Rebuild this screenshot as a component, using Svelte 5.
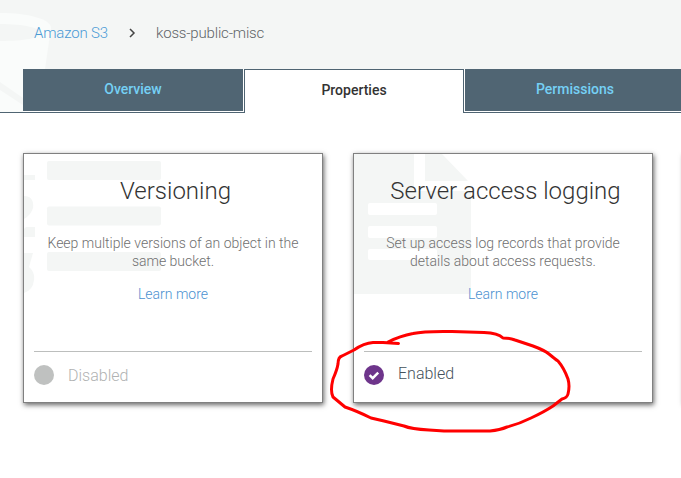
<script>
  const tabs = [
    { name: 'Overview', active: false },
    { name: 'Properties', active: true },
    { name: 'Permissions', active: false }
  ];
  const cards = [
    { title: 'Versioning', lines: ['Keep multiple versions of an object in the', 'same bucket.'], enabled: false, art: 'list' },
    { title: 'Server access logging', lines: ['Set up access log records that provide', 'details about access requests.'], enabled: true, art: 'document' }
  ];
</script>

<div class="page">
  <header>
    <svg class="bucket" width="60" height="112" viewBox="0 0 60 112">
      <path d="M0 13C28 13 51 19 51 28L45 69L38 112H0Z" fill="#fafcfb" />
      <path d="M0 24C24 24 41 28 41 33S24 41 0 41Z" fill="#f4f6f5" />
      <path d="M0 82L23 98V105L0 90Z" fill="#f4f6f5" />
    </svg>
    <nav class="crumbs">
      <a class="root">Amazon S3</a>
      <svg width="7" height="10" viewBox="0 0 7 10"><path d="M1 1L5 5L1 9" fill="none" stroke="#444" stroke-width="1.5" /></svg>
      <span class="bucket-name">koss-public-misc</span>
    </nav>
    <div class="tabs">
      {#each tabs as tab}
        <div class="tab" class:active={tab.active}><span>{tab.name}</span></div>
      {/each}
    </div>
  </header>

  <main>
    {#each cards as card}
      <section class="card">
        <svg class="art" width="140" height="150" viewBox="0 0 140 150" fill="#f4f6f5">
          {#if card.art === 'list'}
            <rect x="23" y="7" width="114" height="19" rx="2" />
            <rect x="23" y="52.500" width="114" height="19" rx="2" />
            <rect x="23" y="98" width="114" height="19" rx="2" />
            <path d="M0 21H11V26H0ZM0 42C8 42 10 48 9 54Q7 61 0 65ZM0 75L2 73H11V83H0ZM0 99H9L5 113Q11 118 10 126Q9 136 0 139Z" />
          {:else}
            <path d="M0 0H60V37H117V137Q117 140 114 140H0ZM71 0H88L114 27H71Z" />
            <g fill="#fff">
              <rect x="14" y="49" width="69" height="12" rx="2" />
              <rect x="14" y="72" width="69" height="12" rx="2" />
              <rect x="14" y="95" width="69" height="11" rx="2" />
            </g>
          {/if}
        </svg>
        <h2>{card.title}</h2>
        <p>{card.lines[0]}<br />{card.lines[1]}</p>
        <a class="more">Learn more</a>
        <footer class:enabled={card.enabled}>
          <svg width="20" height="20" viewBox="0 0 20 20">
            <circle cx="10" cy="10" r="10" fill={card.enabled ? '#6e358b' : '#bfc1c0'} />
            {#if card.enabled}<path d="M5.600 10.200L8.700 13.200L14.200 7.700" fill="none" stroke="#fff" stroke-width="2.500" />{/if}
          </svg>
          <span>{card.enabled ? 'Enabled' : 'Disabled'}</span>
        </footer>
      </section>
    {/each}
    <section class="card"></section>
  </main>

  <svg class="ink" width="681" height="478" viewBox="0 0 681 478">
    <path d="M398.500 343.500L383 342.500H373Q364 343 354 350L342 356Q338 357 338 364Q337 370 333 379Q330 391 333 397Q339 402 345 407Q357 411 371 418L384 421L404 426Q411 429 429 430L444 431H490Q500 430 507 427Q519 424 531 418Q544 412 553 406L562 399Q567 398 568 394Q570 386 568 379Q564 368 558 361Q555 359 549 354Q544 350 533 346L515 340Q510 338 503 338Q498 333 484 332.500L452 331.500Q424 331 413 333.500Q400 336 388 342" />
  </svg>
</div>

<style>
  :global(body) { margin: 0; background: #fff; }
  .page { position: relative; width: 681px; height: 478px; overflow: hidden; font-family: Roboto, sans-serif; font-weight: 300; }
  header { position: relative; height: 113px; background: #f4f6f5; }
  .bucket { position: absolute; left: 0; top: 0; }
  .crumbs { position: relative; box-sizing: border-box; height: 69px; padding: 23px 0 0 34px; display: flex; align-items: flex-start; font-size: 15px; line-height: 20px; letter-spacing: -0.18px; color: #5f6568; }
  .root { width: 95px; color: #4b9bd5; }
  .crumbs svg { margin: 4.500px 20px 0 0; }
  .tabs { position: relative; box-sizing: border-box; height: 44px; padding-left: 23px; display: flex; border-bottom: 1px solid #4f6472; }
  .tab { box-sizing: border-box; flex: none; width: 221px; height: 43px; background: #506573; border-bottom: 1px solid #fff; border-right: 1px solid #fff; text-align: center; font-size: 14px; font-weight: 500; line-height: 41px; color: #75d0f5; }
  .tab.active { width: 220px; height: 44px; background: #fff; border: 1px solid #4f6472; border-bottom: 0; color: #333; line-height: 41px; }
  .tab.active + .tab { width: 221px; border-left: 1px solid #fff; border-right: 0; }
  main { display: flex; width: 1020px; gap: 30px; padding: 40px 0 0 23px; }
  .card { position: relative; box-sizing: border-box; flex: none; width: 300px; height: 250px; padding: 0 10px; border: 1px solid #808080; box-shadow: 1px 2px 5px #666; background: #fff; text-align: center; display: flex; flex-direction: column; }
  .art { position: absolute; left: 0; top: 0; }
  h2 { position: relative; margin: 23px 0 0; padding-left: 5px; font-size: 24px; line-height: 28px; font-weight: 300; color: #333; white-space: nowrap; }
  p { position: relative; margin: 29px -10px 0; font-size: 14px; line-height: 18px; color: #707070; }
  .more { position: relative; margin-top: 15px; font-size: 14px; line-height: 18px; color: #4b91d0; }
  footer { margin-top: 48px; border-top: 1px solid #bcbebd; padding-top: 13px; display: flex; gap: 14px; font-size: 16px; line-height: 22px; color: #b0b2b2; }
  footer.enabled { color: #45525b; }
  footer.enabled span { position: relative; top: -2px; }
  .ink { position: absolute; left: 0; top: 0; fill: none; stroke: #f00; stroke-width: 3; stroke-linecap: round; stroke-linejoin: round; }
</style>
